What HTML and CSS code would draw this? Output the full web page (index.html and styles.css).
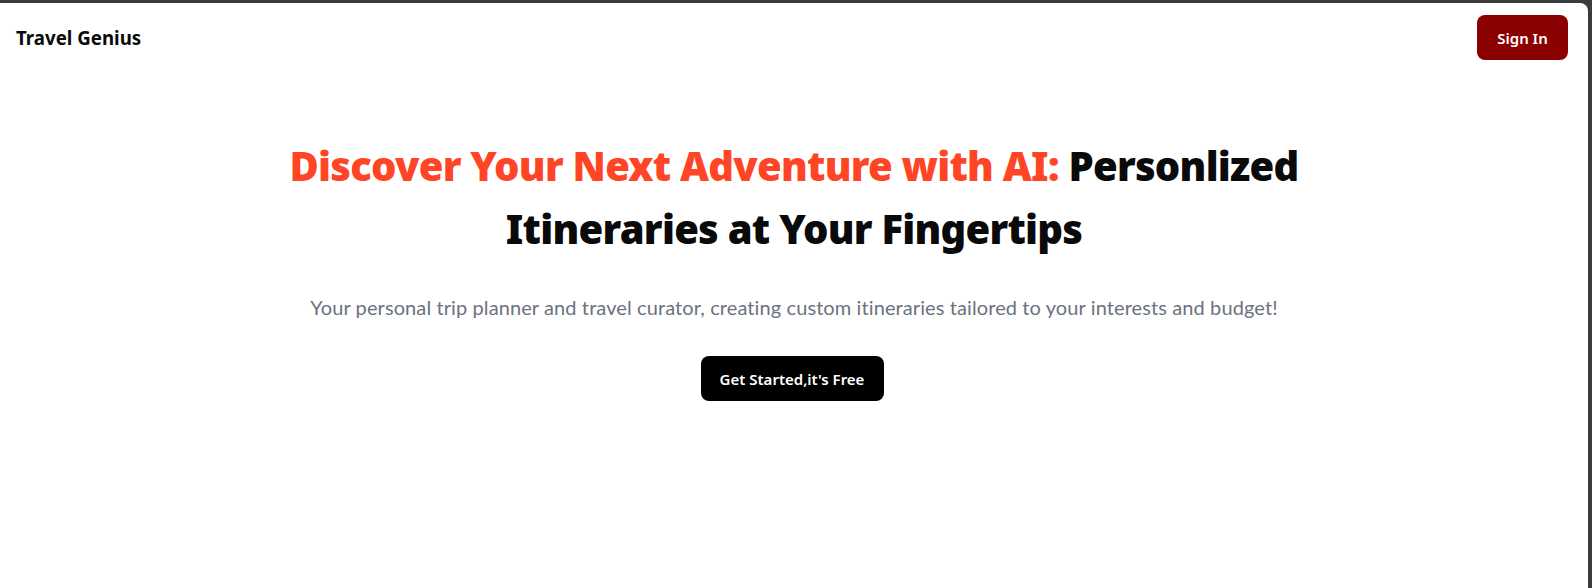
FILE: index.html
```html
<!DOCTYPE html>
<html lang="en">
<head>
<meta charset="utf-8">
<title>Travel Genius</title>
<link rel="stylesheet" href="styles.css">
</head>
<body>
<div class="window">
  <header class="topbar">
    <div class="brand">Travel Genius</div>
    <button class="signin">Sign In</button>
  </header>
  <main class="hero">
    <h1 class="headline"><span class="accent">Discover Your Next Adventure with AI: </span>Personlized Itineraries at Your Fingertips</h1>
    <p class="lead">Your personal trip planner and travel curator, creating custom itineraries tailored to your interests and budget!</p>
    <button class="cta">Get Started,it's Free</button>
  </main>
</div>
</body>
</html>
```

FILE: styles.css
```css
html, body {
  margin: 0;
  padding: 0;
  height: 100%;
}
body {
  background: #3b3b3b;
  font-family: "Noto Sans", "Open Sans", sans-serif;
  color: #0a0a0a;
}
.window {
  margin: 3px 4px 0 0;
  height: calc(100% - 3px);
  background: #ffffff;
  border-top-right-radius: 8px;
  overflow: hidden;
}
.topbar {
  display: flex;
  align-items: center;
  justify-content: space-between;
  padding: 12px 20px 12px 16px;
}
.brand {
  font-size: 18.7px;
  font-weight: 700;
}
.signin {
  background: #8b0000;
  color: #ffffff;
  border: none;
  border-radius: 8px;
  width: 91px;
  height: 45px;
  font-family: inherit;
  font-size: 15px;
  font-weight: 600;
}
.hero {
  display: flex;
  flex-direction: column;
  align-items: center;
  padding: 62px 224px 0;
  text-align: center;
}
.headline {
  margin: 0;
  font-size: 40px;
  line-height: 63px;
  font-weight: 900;
  letter-spacing: -0.75px;
}
.accent {
  color: #ff4526;
}
.lead {
  margin: 33px 0 0;
  font-family: "Lato", "Noto Sans", sans-serif;
  font-size: 20px;
  line-height: 28px;
  letter-spacing: 0.1px;
  color: #6b7280;
}
.cta {
  margin: 35px 4px 0 0;
  background: #000000;
  color: #ffffff;
  border: none;
  border-radius: 8px;
  width: 183px;
  height: 45px;
  font-family: inherit;
  font-size: 15px;
  font-weight: 600;
}
```
